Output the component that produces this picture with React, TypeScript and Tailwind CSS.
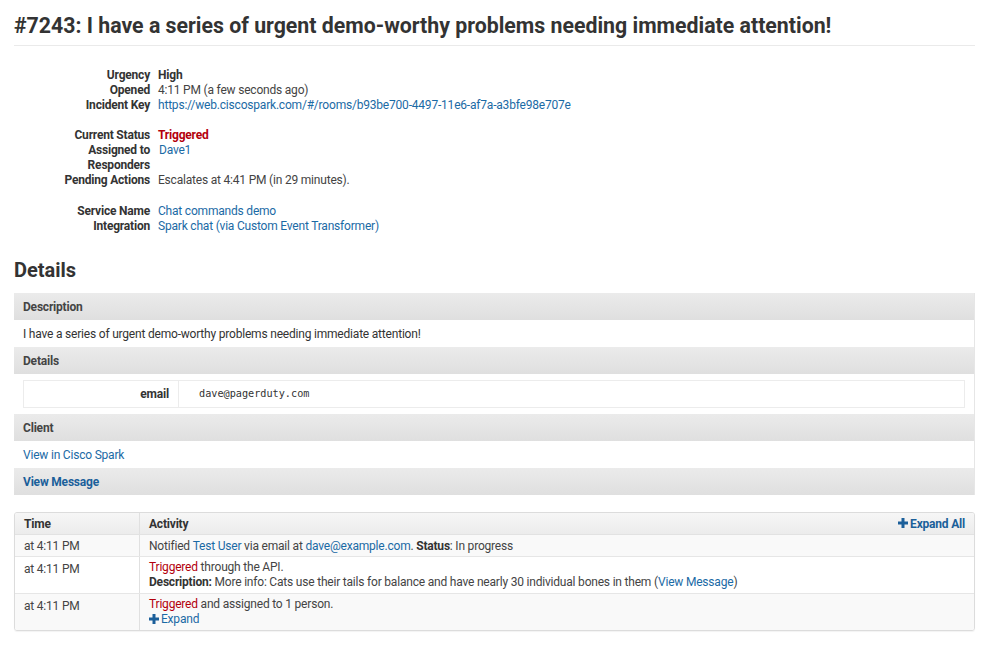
import React from 'react';

const font = { fontFamily: 'Roboto, "Liberation Sans", Arial, sans-serif' };

function Field({ label, children }: { label: string; children?: React.ReactNode }) {
  return (
    <div className="flex h-[15px] items-center">
      <div className="w-[144px] pr-2 text-right font-bold text-[#333]">{label}</div>
      <div className="text-[#444]">{children}</div>
    </div>
  );
}

const A = ({ children, className = '' }: { children: React.ReactNode; className?: string }) => (
  <a href="#" className={`text-[#1b6aa5] ${className}`}>{children}</a>
);

function Plus() {
  return (
    <svg width="10" height="10" viewBox="0 0 10 10" className="inline-block mr-[2px] -mt-[2px]">
      <path d="M3.5 0h3v3.5H10v3H6.5V10h-3V6.5H0v-3h3.5z" fill="#1b5f9a" />
    </svg>
  );
}

function PanelHead({ children }: { children: React.ReactNode }) {
  return (
    <div className="flex h-[27px] items-center px-[9px] bg-gradient-to-b from-[#ebebeb] to-[#dfdfdf] font-bold text-[#444] text-[12px]">
      {children}
    </div>
  );
}

export default function App() {
  return (
    <div className="min-h-screen bg-white px-[14px] text-[12px] tracking-[-0.2px] text-[#333]" style={font}>
      <h1 className="pt-[12px] pb-[6px] text-[21.3px] tracking-normal font-bold leading-[27px] text-[#333] border-b border-[#eaeaea]">
        #7243: I have a series of urgent demo-worthy problems needing immediate attention!
      </h1>

      <div className="pt-[21px]">
        <Field label="Urgency"><span className="font-bold text-[#333]">High</span></Field>
        <Field label="Opened">4:11 PM (a few seconds ago)</Field>
        <Field label="Incident Key"><A>https://web.ciscospark.com/#/rooms/b93be700-4497-11e6-af7a-a3bfe98e707e</A></Field>
        <div className="h-[15px]" />
        <Field label="Current Status"><span className="font-bold text-[#b3000c]">Triggered</span></Field>
        <Field label="Assigned to"><A className="ml-[1px]">Dave1</A></Field>
        <Field label="Responders" />
        <div className="flex h-[16px] items-center">
          <div className="w-[144px] pr-2 text-right font-bold text-[#333]">Pending Actions</div>
          <div className="text-[#444]">Escalates at 4:41 PM (in 29 minutes).</div>
        </div>
        <div className="h-[15px]" />
        <Field label="Service Name"><A>Chat commands demo</A></Field>
        <Field label="Integration"><A>Spark chat (via Custom Event Transformer)</A></Field>
      </div>

      <h2 className="pt-[25px] pb-[11px] text-[20px] tracking-normal font-bold leading-[24px] text-[#333]">Details</h2>

      <div className="border-r border-[#e6e6e6]">
        <PanelHead>Description</PanelHead>
        <div className="flex h-[27px] items-center px-[9px] bg-white text-[#333]">
          I have a series of urgent demo-worthy problems needing immediate attention!
        </div>
        <PanelHead>Details</PanelHead>
        <div className="bg-white px-[9px] py-[6px]">
          <div className="flex h-[28px] border border-[#ececec]">
            <div className="w-[155px] flex items-center justify-end pr-[9px] font-bold text-[#333] border-r border-[#ececec]">
              email
            </div>
            <div className="flex items-center pl-[20px] text-[#333] tracking-normal" style={{ fontFamily: '"DejaVu Sans Mono", monospace', fontSize: '10.2px' }}>
              dave@pagerduty.com
            </div>
          </div>
        </div>
        <PanelHead>Client</PanelHead>
        <div className="flex h-[27px] items-center px-[9px] bg-white">
          <A>View in Cisco Spark</A>
        </div>
        <PanelHead><span className="text-[#1b5f9a]">View Message</span></PanelHead>
      </div>

      <div className="mt-[17px] rounded-[3px] border border-[#dcdcdc] overflow-hidden shadow-[0_1px_1px_rgba(0,0,0,0.05)]">
        <div className="flex h-[22px] items-center bg-gradient-to-b from-[#f6f6f6] to-[#ececec] border-b border-[#e2e2e2] font-bold text-[#333]">
          <div className="w-[125px] h-full flex items-center pl-[9px] border-r border-[#e0e0e0]">Time</div>
          <div className="flex-1 pl-[9px]">Activity</div>
          <div className="pr-[9px] text-[#1b5f9a]"><Plus />Expand All</div>
        </div>
        <div className="flex h-[22px] bg-[#f9f9f9] border-b border-[#e6e6e6]">
          <div className="w-[125px] flex items-center pl-[9px] border-r border-[#e0e0e0] text-[#444]">at 4:11 PM</div>
          <div className="flex-1 flex items-center pl-[9px] text-[#444]">
            Notified&nbsp;<A>Test User</A>&nbsp;via email at&nbsp;<A>dave@example.com</A>.&nbsp;<b className="text-[#333]">Status</b>: In progress
          </div>
        </div>
        <div className="flex h-[37px] bg-white border-b border-[#e6e6e6]">
          <div className="w-[125px] pt-[3px] pl-[9px] border-r border-[#e0e0e0] text-[#444]">at 4:11 PM</div>
          <div className="flex-1 pt-[3px] pl-[9px] text-[#444] leading-[15px]">
            <div><span className="text-[#b3000c]">Triggered</span> through the API.</div>
            <div><b className="text-[#333]">Description:</b> More info: Cats use their tails for balance and have nearly 30 individual bones in them (<A>View Message</A>)</div>
          </div>
        </div>
        <div className="flex h-[36px] bg-[#f9f9f9]">
          <div className="w-[125px] pt-[3px] pl-[9px] border-r border-[#e0e0e0] text-[#444]">at 4:11 PM</div>
          <div className="flex-1 pt-[3px] pl-[9px] text-[#444] leading-[15px]">
            <div><span className="text-[#b3000c]">Triggered</span> and assigned to 1 person.</div>
            <div><a href="#" className="text-[#1b6aa5]"><Plus />Expand</a></div>
          </div>
        </div>
      </div>
    </div>
  );
}
